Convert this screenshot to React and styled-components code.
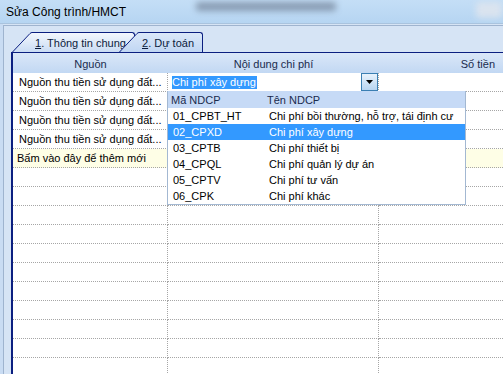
import React from "react";
import styled, { createGlobalStyle, css } from "styled-components";

const GlobalStyle = createGlobalStyle`
    html, body {
        margin: 0;
        padding: 0;
        background: #d6e4f5;
    }
    body {
        font-family: "Liberation Sans", Arial, sans-serif;
        font-size: 11px;
        color: #000;
    }
`;

const Window = styled.div`
    width: 503px;
    height: 374px;
    overflow: hidden;
    display: flex;
    flex-direction: column;
    background: #d6e4f5;
`;

const TitleBar = styled.div`
    height: 23px;
    flex: none;
    display: flex;
    align-items: flex-start;
    background: linear-gradient(#c4def6, #b6d5f2);
    border-bottom: 1px solid #a9c3de;
    overflow: hidden;
`;

const Title = styled.div`
    font-size: 12px;
    padding: 5px 0 0 6px;
    white-space: nowrap;
    color: #000;
`;

const Blur = styled.span`
    flex: none;
    width: ${(p) => p.w}px;
    height: ${(p) => p.h}px;
    margin-left: ${(p) => p.ml}px;
    margin-top: ${(p) => p.mt}px;
    background: ${(p) => p.c};
    filter: blur(3px);
    border-radius: 3px;
`;

const Body = styled.div`
    flex: 1;
    display: flex;
    padding: 1px 0 0 0;
    background: linear-gradient(90deg, #c9dcf3 0 3px, #d6e4f5 3px);
`;

const Frame = styled.div`
    flex: 1;
    margin-left: 3px;
    border-left: 1px solid #9fb4cf;
    border-top: 1px solid #9fb4cf;
    padding-left: 7px;
    display: flex;
    flex-direction: column;
    min-width: 0;
`;

const TabStrip = styled.div`
    height: 26px;
    flex: none;
    display: flex;
    align-items: flex-end;
    padding-left: 1px;
`;

const Tab = styled.div`
    display: flex;
    align-items: flex-end;
    height: 20px;
    position: relative;
    ${(p) =>
        p.active &&
        css`
            margin-left: -16px;
            z-index: 1;
        `}
`;

const TabBody = styled.div`
    height: 19px;
    width: ${(p) => p.w}px;
    border-top: 1px solid #0b1f80;
    border-right: 1px solid #0b1f80;
    border-top-right-radius: 3px;
    background: ${(p) =>
        p.active
            ? "linear-gradient(#dbe8f9, #c0d6f3)"
            : "linear-gradient(#f3f7fd, #cadcf4)"};
    padding-left: 3px;
    display: flex;
    align-items: center;
    white-space: nowrap;
    font-size: 11px;
    color: #0b1b3c;
    u {
        text-decoration: underline;
    }
`;

function TabSlant({ active }) {
    const id = active ? "ga" : "gi";
    return (
        <svg width="20" height="20" viewBox="0 0 20 20" style={{ display: "block", flex: "none" }}>
            <defs>
                <linearGradient id={id} x1="0" y1="0" x2="0" y2="1">
                    <stop offset="0" stopColor={active ? "#dbe8f9" : "#f3f7fd"} />
                    <stop offset="1" stopColor={active ? "#c0d6f3" : "#cadcf4"} />
                </linearGradient>
            </defs>
            <path d="M0 20 L18 1.5 Q19 0.5 20 0.5 L20 20 Z" fill={`url(#${id})`} />
            <path d="M0.5 20 L18 1.5 Q19 0.5 20 0.5" fill="none" stroke="#0b1f80" strokeWidth="1" />
        </svg>
    );
}

const Grid = styled.div`
    flex: 1;
    border-top: 1px solid #0b1f80;
    border-left: 2px solid #0b1f80;
    background: #fff;
    display: flex;
    flex-direction: column;
    min-width: 0;
`;

const columns = "155px 211px 1fr";

const HeaderRow = styled.div`
    display: grid;
    grid-template-columns: ${columns};
    height: 20px;
    flex: none;
    background: linear-gradient(#dae7f8, #c2d8f3);
    color: #1a2b4d;
`;

const HeaderCell = styled.div`
    display: flex;
    align-items: center;
    justify-content: ${(p) => (p.right ? "flex-end" : "center")};
    padding-right: ${(p) => (p.right ? "8px" : "0")};
    padding-top: 1px;
    white-space: nowrap;
    font-size: 11px;
`;

const Rows = styled.div`
    position: relative;
    flex: 1;
`;

const Row = styled.div`
    display: grid;
    grid-template-columns: ${columns};
    height: 19px;
    background: ${(p) => (p.add ? "#fefee6" : "#fff")};
`;

const Cell = styled.div`
    border-bottom: 1px dotted #a6a6a6;
    border-right: ${(p) => (p.last ? "none" : "1px dotted #a6a6a6")};
    display: flex;
    align-items: center;
    padding-left: ${(p) => p.pad || 0}px;
    white-space: nowrap;
    overflow: hidden;
    font-size: 11px;
`;

const Combo = styled.div`
    border-bottom: 1px dotted #a6a6a6;
    border-right: 1px dotted #a6a6a6;
    background: #fff;
    display: flex;
    align-items: stretch;
    padding-left: 4px;
`;

const ComboText = styled.div`
    flex: 1;
    display: flex;
    align-items: center;
`;

const Selected = styled.span`
    background: #3399ff;
    color: #fff;
    font-size: 11px;
    line-height: 13px;
    padding-right: 1px;
`;

const ComboButton = styled.div`
    width: 15px;
    flex: none;
    border: 1px solid #3b7fb3;
    background: linear-gradient(#e8f2fc, #b8d5f1);
    display: flex;
    align-items: center;
    justify-content: center;
`;

const Dropdown = styled.div`
    position: absolute;
    left: 154px;
    top: 18px;
    width: 297px;
    border: 1px solid #a3b8d2;
    border-top: none;
    background: #fff;
    z-index: 2;
`;

const ListHeader = styled.div`
    display: grid;
    grid-template-columns: 96px 1fr;
    height: 17px;
    background: #c6daf6;
    color: #1a2b4d;
    font-size: 11px;
    align-items: center;
    padding-left: 3px;
`;

const ListItem = styled.div`
    display: grid;
    grid-template-columns: 96px 1fr;
    height: 16px;
    align-items: center;
    padding-left: 5px;
    font-size: 11px;
    white-space: nowrap;
    background: ${(p) => (p.selected ? "#3399ff" : "transparent")};
    color: ${(p) => (p.selected ? "#fff" : "#000")};
`;

const items = [
    ["01_CPBT_HT", "Chi phí bồi thường, hỗ trợ, tái định cư"],
    ["02_CPXD", "Chi phí xây dựng"],
    ["03_CPTB", "Chi phí thiết bị"],
    ["04_CPQL", "Chi phí quản lý dự án"],
    ["05_CPTV", "Chi phí tư vấn"],
    ["06_CPK", "Chi phí khác"],
];

const source = "Nguồn thu tiền sử dụng đất...";

export default function App() {
    const empty = Array.from({ length: 11 });
    return (
        <>
            <GlobalStyle />
            <Window>
                <TitleBar>
                    <Title>Sửa Công trình/HMCT</Title>
                    <Blur w={140} h={9} ml={70} mt={2} c="rgba(70,80,100,0.45)" />
                    <Blur w={26} h={16} ml={140} mt={2} c="rgba(225,230,238,0.8)" />
                </TitleBar>
                <Body>
                    <Frame>
                        <TabStrip>
                            <Tab>
                                <TabSlant />
                                <TabBody w={99}>
                                    <span>
                                        <u>1</u>. Thông tin chung
                                    </span>
                                </TabBody>
                            </Tab>
                            <Tab active>
                                <TabSlant active />
                                <TabBody active w={60}>
                                    <span>
                                        <u>2</u>. Dự toán
                                    </span>
                                </TabBody>
                            </Tab>
                        </TabStrip>
                        <Grid>
                            <HeaderRow>
                                <HeaderCell>Nguồn</HeaderCell>
                                <HeaderCell>Nội dung chi phí</HeaderCell>
                                <HeaderCell right>Số tiền</HeaderCell>
                            </HeaderRow>
                            <Rows>
                                <Row>
                                    <Cell pad={6}>{source}</Cell>
                                    <Combo>
                                        <ComboText>
                                            <Selected>Chi phí xây dựng</Selected>
                                        </ComboText>
                                        <ComboButton>
                                            <svg width="7" height="4" viewBox="0 0 7 4">
                                                <path d="M0 0 H7 L3.5 4 Z" fill="#000" />
                                            </svg>
                                        </ComboButton>
                                    </Combo>
                                    <Cell last />
                                </Row>
                                {[0, 1, 2].map((i) => (
                                    <Row key={i}>
                                        <Cell pad={6}>{source}</Cell>
                                        <Cell />
                                        <Cell last />
                                    </Row>
                                ))}
                                <Row add>
                                    <Cell pad={4}>Bấm vào đây để thêm mới</Cell>
                                    <Cell />
                                    <Cell last />
                                </Row>
                                {empty.map((_, i) => (
                                    <Row key={"e" + i}>
                                        <Cell />
                                        <Cell />
                                        <Cell last />
                                    </Row>
                                ))}
                                <Dropdown>
                                    <ListHeader>
                                        <span>Mã NDCP</span>
                                        <span>Tên NDCP</span>
                                    </ListHeader>
                                    {items.map(([code, name]) => (
                                        <ListItem key={code} selected={code === "02_CPXD"}>
                                            <span>{code}</span>
                                            <span>{name}</span>
                                        </ListItem>
                                    ))}
                                </Dropdown>
                            </Rows>
                        </Grid>
                    </Frame>
                </Body>
            </Window>
        </>
    );
}
